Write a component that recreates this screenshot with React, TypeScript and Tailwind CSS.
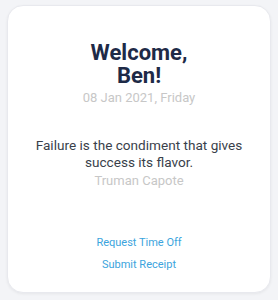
export default function App() {
  return (
    <div className="w-[278px] h-[300px] bg-[#f3f4f7] pt-[5px] px-[7px] pb-[7px] font-['Roboto',sans-serif]">
      <div className="h-full rounded-2xl bg-white border border-[#e8e9ee] shadow-[0_1px_3px_rgba(0,0,0,0.06)] flex flex-col items-center text-center pt-[35px] pb-[19px]">
        <h1 className="text-[22px] leading-[23px] font-bold text-[#1e2a47]">
          Welcome,
          <br />
          Ben!
        </h1>
        <div className="mt-[3px] text-[13px] leading-[16px] text-[#c7c7c7]">08 Jan 2021, Friday</div>
        <p className="mt-[31px] text-[13.6px] leading-[17px] text-[#3a3f4b] px-4">
          Failure is the condiment that gives success its flavor.
        </p>
        <div className="mt-[2px] text-[13px] leading-[16px] text-[#c7c7c7]">Truman Capote</div>
        <div className="mt-auto flex flex-col items-center gap-[6px]">
          <a href="#" className="text-[11px] leading-[16px] text-[#3ba4dd]">Request Time Off</a>
          <a href="#" className="text-[11px] leading-[16px] text-[#3ba4dd]">Submit Receipt</a>
        </div>
      </div>
    </div>
  );
}
